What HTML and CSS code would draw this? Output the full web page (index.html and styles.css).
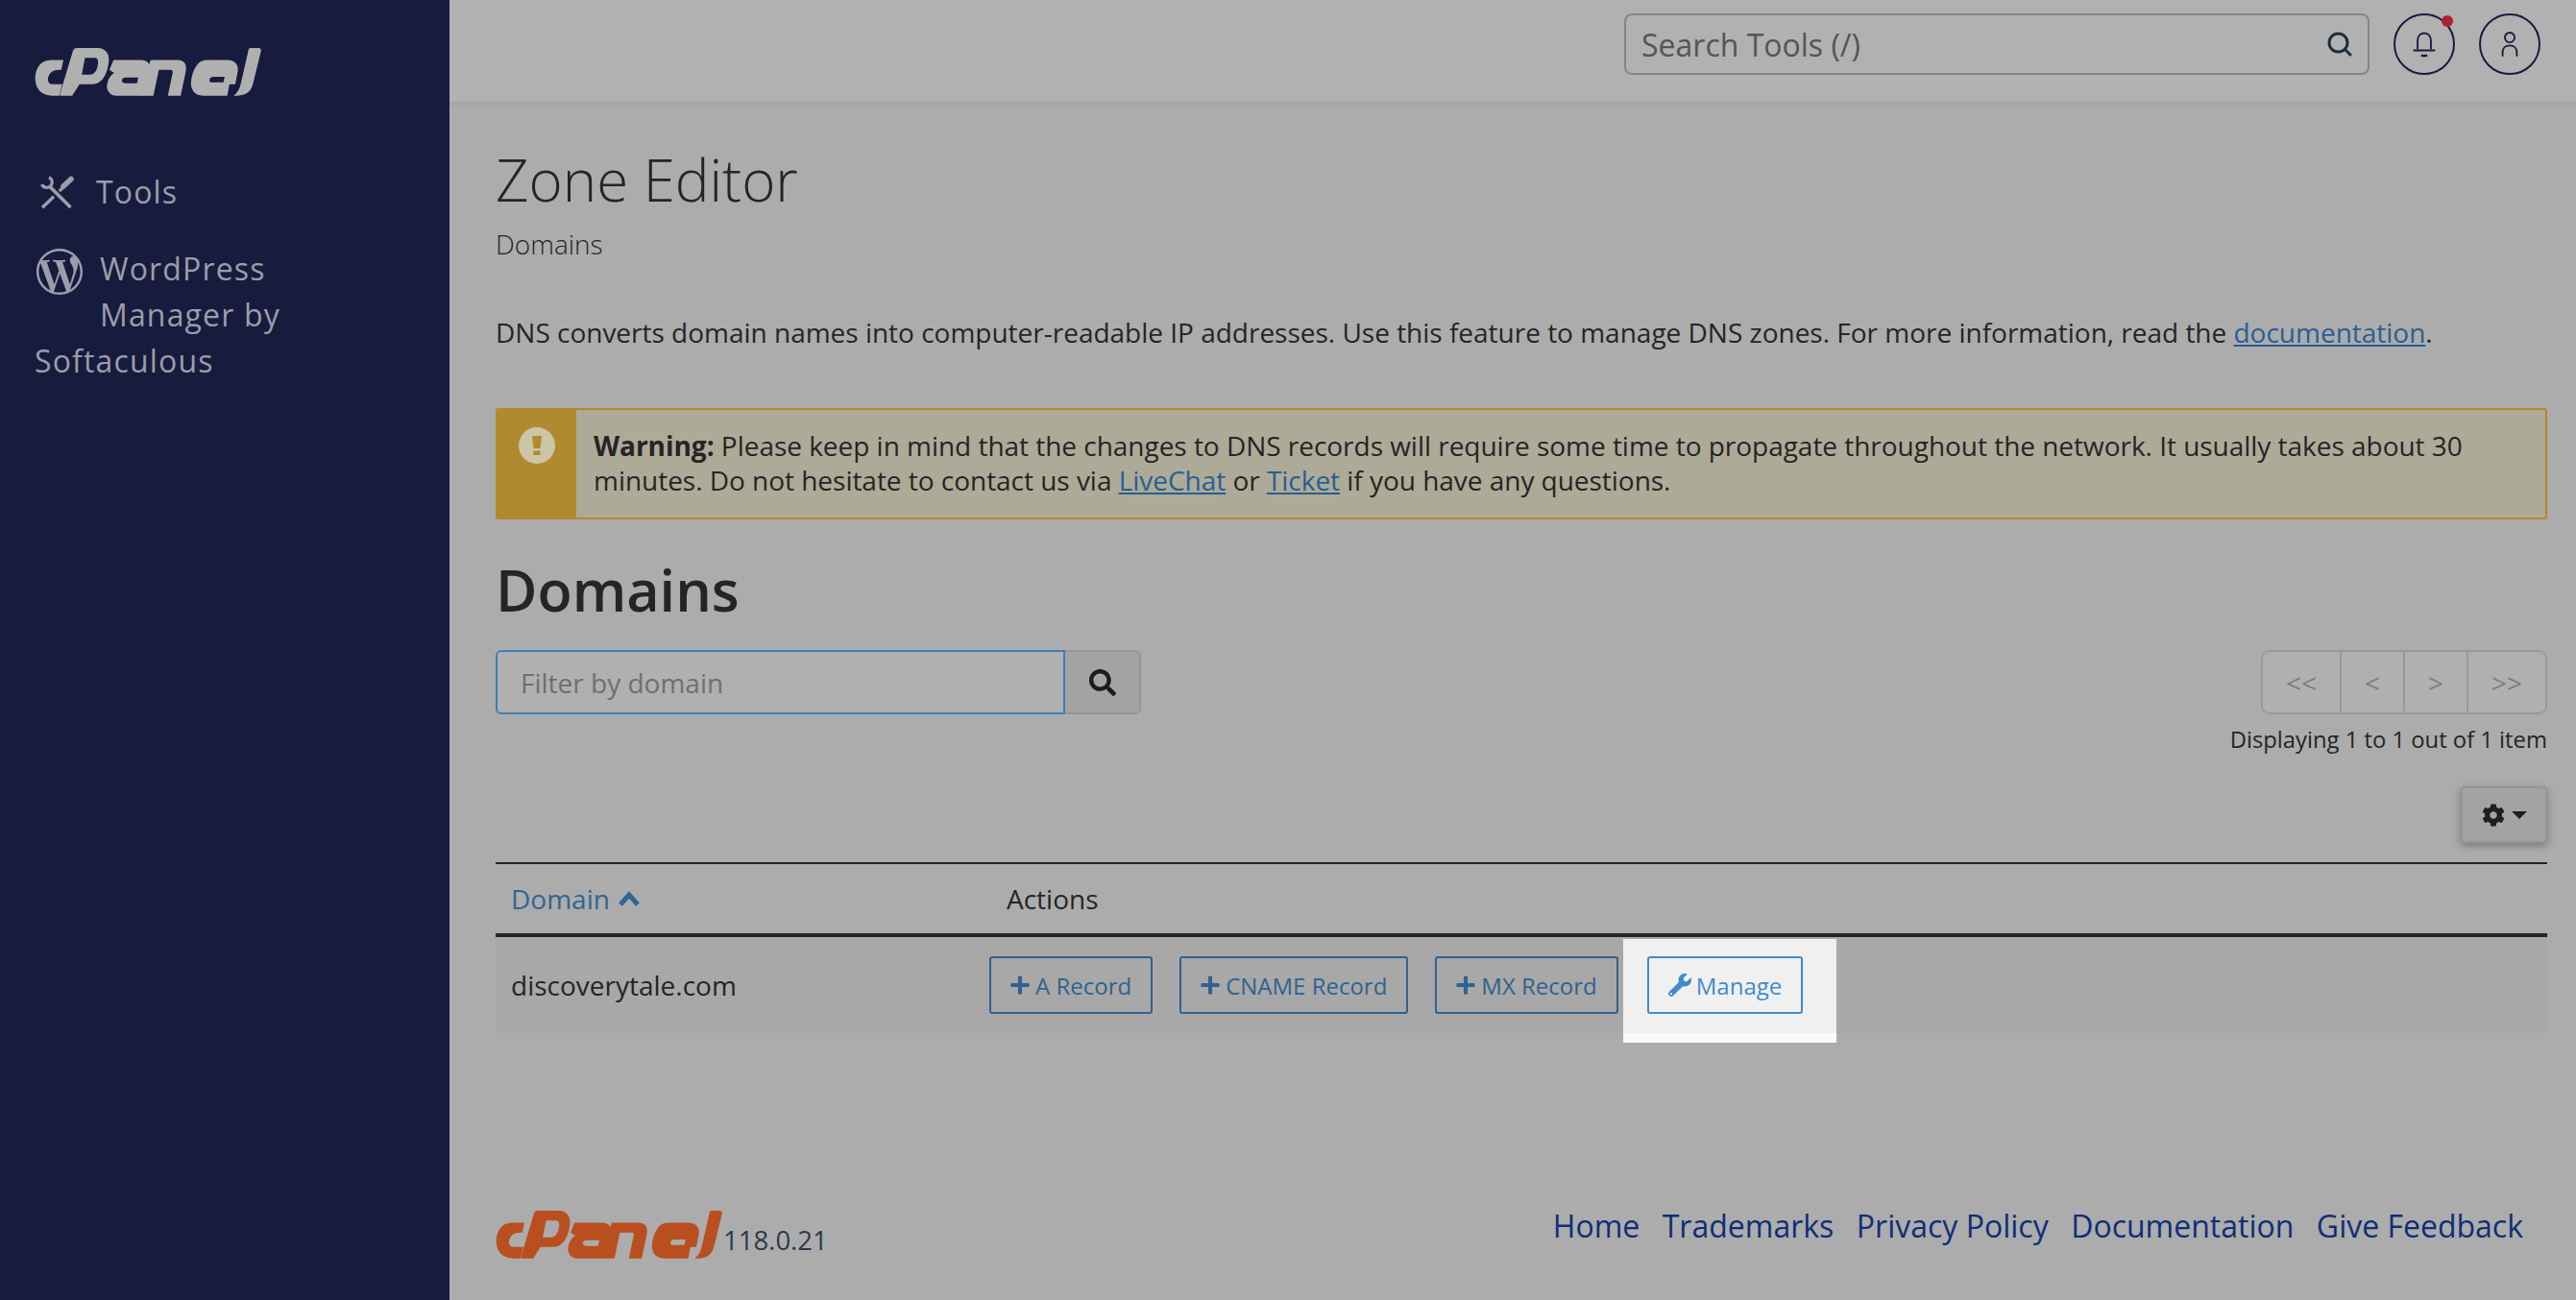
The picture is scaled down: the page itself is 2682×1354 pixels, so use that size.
FILE: index.html
```html
<!DOCTYPE html>
<html lang="en">
<head>
<meta charset="utf-8">
<title>Zone Editor - cPanel</title>
<link rel="stylesheet" href="styles.css">
</head>
<body>
<svg class="defs" width="0" height="0" aria-hidden="true">
  <symbol id="cpanel-logo" viewBox="50 93 706 148" preserveAspectRatio="none">
    <path d="M140 130H100C70 130 52 155 52 187C52 218 72 240 105 240H127L136 205H105C95 205 90 195 92 185C95 170 108 160 125 160H133Z"/>
    <path fill-rule="evenodd" d="M182 93H247C272 93 287 113 280 143C274 180 257 205 227 205H190L167 240H132Q127 240 129 235L169 103Q172 93 182 93ZM207 123H237C247 123 250 133 247 145C244 163 237 175 222 175H197Z"/>
    <path fill-rule="evenodd" d="M296 130H382C404 130 413 145 409 165L392 240H305C285 240 270 222 277 200C281 186 288 176 298 170L283 160ZM334 184C318 184 318 202 334 202H369L373 184Z"/>
    <path d="M412 130H495C518 130 526 145 520 170L505 240H465L480 170C482 165 480 160 472 160H437L420 240H386L405 150C408 140 410 134 412 130Z"/>
    <path fill-rule="evenodd" d="M585 130H650C676 130 688 148 682 170L675 205H657L650 240H575C548 240 533 220 538 190C545 155 560 130 585 130ZM607 182H642L638 199H600C592 199 592 182 607 182Z"/>
    <path d="M722 93H748C754 93 756 98 755 103L731 200C725 228 708 240 678 240H670C682 232 688 220 692 205L716 100C717 96 718 93 722 93Z"/>
  </symbol>
  <symbol id="fa-search" viewBox="0 0 512 512"><path d="M505 442.7L405.3 343c-4.5-4.5-10.6-7-17-7H372c27.6-35.3 44-79.7 44-128C416 93.1 322.9 0 208 0S0 93.1 0 208s93.1 208 208 208c48.3 0 92.7-16.4 128-44v16.3c0 6.4 2.5 12.5 7 17l99.7 99.7c9.4 9.4 24.6 9.4 33.9 0l28.3-28.3c9.4-9.4 9.4-24.6.1-34zM208 336c-70.7 0-128-57.2-128-128 0-70.7 57.2-128 128-128 70.7 0 128 57.2 128 128 0 70.7-57.2 128-128 128z"/></symbol>
  <symbol id="fa-plus" viewBox="0 0 448 512"><path d="M416 208H272V64c0-17.67-14.33-32-32-32h-32c-17.67 0-32 14.33-32 32v144H32c-17.67 0-32 14.33-32 32v32c0 17.67 14.33 32 32 32h144v144c0 17.67 14.33 32 32 32h32c17.67 0 32-14.33 32-32V304h144c17.67 0 32-14.33 32-32v-32c0-17.67-14.33-32-32-32z"/></symbol>
</svg>

<div class="app">
  <aside class="sidebar">
    <svg class="side-logo"><use href="#cpanel-logo"/></svg>
    <nav class="side-nav">
      <a class="side-item side-tools">
        <svg class="tools-icon" viewBox="0 0 35 35" fill="none" stroke="currentColor">
          <path d="M2 33.3L14 21.7" stroke-width="3.4"/>
          <path d="M19.7 16L23 13" stroke-width="3.4"/>
          <path d="M24 11L32 3.5" stroke-width="5.5" stroke-linecap="round"/>
          <path d="M31.5 33L9.5 11" stroke-width="3.8"/>
          <path d="M9 1.7A5.6 5.6 0 1 1 1.5 9" stroke-width="3.2"/>
        </svg>
        <span>Tools</span>
      </a>
      <a class="side-item side-wp">
        <svg class="wp-icon" viewBox="0 0 24 24" fill="currentColor"><path d="M21.469 6.825c.84 1.537 1.318 3.3 1.318 5.175 0 3.979-2.156 7.456-5.363 9.325l3.295-9.527c.615-1.54.82-2.771.82-3.864 0-.405-.026-.78-.07-1.11m-7.981.105c.647-.03 1.232-.105 1.232-.105.582-.075.514-.93-.067-.899 0 0-1.755.135-2.88.135-1.064 0-2.85-.15-2.85-.15-.585-.03-.661.855-.075.885 0 0 .54.061 1.125.09l1.68 4.605-2.37 7.08L5.354 6.9c.649-.03 1.234-.1 1.234-.1.585-.075.516-.93-.065-.896 0 0-1.746.138-2.874.138-.2 0-.438-.008-.69-.015C4.911 3.15 8.235 1.215 12 1.215c2.809 0 5.365 1.072 7.286 2.833-.046-.003-.091-.009-.141-.009-1.06 0-1.812.923-1.812 1.914 0 .89.513 1.643 1.06 2.531.411.72.89 1.643.89 2.977 0 .915-.354 1.994-.821 3.479l-1.075 3.585-3.9-11.61.001.014zM12 22.784c-1.059 0-2.081-.153-3.048-.437l3.237-9.406 3.315 9.087c.024.053.05.101.078.149-1.12.393-2.325.609-3.582.609M1.211 12c0-1.564.336-3.05.935-4.39L7.29 21.709C3.694 19.96 1.212 16.271 1.211 12M12 0C5.385 0 0 5.385 0 12s5.385 12 12 12 12-5.385 12-12S18.615 0 12 0"/></svg>
        WordPress Manager by Softaculous
      </a>
    </nav>
  </aside>

  <div class="main">
    <header class="topbar">
      <div class="tool-search">
        <span class="tool-search-text">Search Tools (/)</span>
        <svg class="tool-search-icon" viewBox="0 0 28 28" fill="none" stroke="currentColor"><circle cx="12.5" cy="12.5" r="9.5" stroke-width="3"/><path d="M19.5 19.5L25 25" stroke-width="3" stroke-linecap="round"/></svg>
      </div>
      <button class="round-btn bell-btn">
        <svg class="round-icon" viewBox="0 0 26 30" fill="none" stroke="currentColor" stroke-width="2"><path d="M5.5 21V11.5C5.5 6 8.5 2.5 13 2.5S20.5 6 20.5 11.5V21"/><path d="M1.5 22H24.5" stroke-linecap="round"/><path d="M10.5 28H15.5" stroke-width="2.5" stroke-linecap="round"/></svg>
        <span class="bell-dot"></span>
      </button>
      <button class="round-btn">
        <svg class="round-icon" viewBox="0 0 26 30" fill="none" stroke="currentColor" stroke-width="2"><circle cx="13" cy="7.5" r="5.5"/><path d="M5 28V24C5 19 8.5 16.5 13 16.5S21 19 21 24V28" stroke-linecap="round"/></svg>
      </button>
    </header>

    <main class="content">
      <h1 class="page-title">Zone Editor</h1>
      <p class="page-sub">Domains</p>
      <p class="intro">DNS converts domain names into computer-readable IP addresses. Use this feature to manage DNS zones. For more information, read the <a class="link">documentation</a>.</p>

      <div class="alert">
        <div class="alert-side">
          <svg class="alert-icon" viewBox="0 0 38 38"><circle cx="19" cy="19" r="19" class="alert-disc"/><path class="alert-mark" d="M14 9H24L22.5 22H15.5ZM15.5 24.5H22.5V29H15.5Z"/></svg>
        </div>
        <div class="alert-body"><strong>Warning:</strong> Please keep in mind that the changes to DNS records will require some time to propagate throughout the network. It usually takes about 30 minutes. Do not hesitate to contact us via <a class="link">LiveChat</a> or <a class="link">Ticket</a> if you have any questions.</div>
      </div>

      <h2 class="section-title">Domains</h2>

      <div class="controls">
        <div class="filter">
          <div class="filter-input">Filter by domain</div>
          <button class="filter-btn"><svg class="filter-icon"><use href="#fa-search"/></svg></button>
        </div>
        <div class="paging">
          <div class="pager">
            <span class="page-cell">&lt;&lt;</span>
            <span class="page-cell page-mid">&lt;</span>
            <span class="page-cell page-mid">&gt;</span>
            <span class="page-cell">&gt;&gt;</span>
          </div>
          <div class="page-count">Displaying 1 to 1 out of 1 item</div>
        </div>
      </div>

      <div class="settings-row">
        <button class="gear-btn">
          <svg class="gear-icon" viewBox="0 0 512 512"><path d="M487.4 315.7l-42.6-24.6c4.3-23.2 4.3-47 0-70.2l42.6-24.6c4.9-2.8 7.1-8.6 5.5-14-11.1-35.6-30-67.8-54.7-94.6-3.8-4.1-10-5.1-14.8-2.3L380.8 110c-17.9-15.4-38.5-27.3-60.8-35.1V25.8c0-5.6-3.9-10.5-9.4-11.7-36.7-8.2-74.3-7.8-109.2 0-5.5 1.2-9.4 6.1-9.4 11.7V75c-22.2 7.9-42.8 19.8-60.8 35.1L88.7 85.5c-4.9-2.8-11-1.9-14.8 2.3-24.7 26.7-43.6 58.9-54.7 94.6-1.7 5.4.6 11.2 5.5 14L67.3 221c-4.3 23.2-4.3 47 0 70.2l-42.6 24.6c-4.9 2.8-7.1 8.6-5.5 14 11.1 35.6 30 67.8 54.7 94.6 3.8 4.1 10 5.1 14.8 2.3l42.6-24.6c17.9 15.4 38.5 27.3 60.8 35.1v49.2c0 5.6 3.9 10.5 9.4 11.7 36.7 8.2 74.3 7.8 109.2 0 5.5-1.2 9.4-6.1 9.4-11.7v-49.2c22.2-7.9 42.8-19.8 60.8-35.1l42.6 24.6c4.9 2.8 11 1.9 14.8-2.3 24.7-26.7 43.6-58.9 54.7-94.6 1.5-5.5-.7-11.3-5.6-14.1zM256 336c-44.1 0-80-35.9-80-80s35.9-80 80-80 80 35.9 80 80-35.9 80-80 80z"/></svg>
          <span class="caret"></span>
        </button>
      </div>

      <div class="table">
        <div class="thead">
          <div class="th-domain">Domain <svg class="chev" viewBox="0 0 24 16" fill="none" stroke="currentColor" stroke-width="5"><path d="M3 14L12 4L21 14"/></svg></div>
          <div class="th-actions">Actions</div>
        </div>
        <div class="tbody">
          <div class="td-domain">discoverytale.com</div>
          <div class="td-actions">
            <a class="btn"><svg class="btn-icon"><use href="#fa-plus"/></svg>A Record</a>
            <a class="btn"><svg class="btn-icon"><use href="#fa-plus"/></svg>CNAME Record</a>
            <a class="btn"><svg class="btn-icon"><use href="#fa-plus"/></svg>MX Record</a>
            <span class="spot">
              <a class="btn btn-lit">
                <svg class="btn-icon wrench" viewBox="0 0 512 512"><path d="M507.73 109.1c-2.24-9.03-13.54-12.09-20.12-5.51l-74.36 74.36-67.88-11.31-11.31-67.88 74.36-74.36c6.62-6.62 3.43-17.9-5.66-20.16-47.38-11.74-99.55.91-136.58 37.93-39.64 39.64-50.55 97.1-34.05 147.2L18.74 402.76c-24.99 24.99-24.99 65.51 0 90.5 24.99 24.99 65.51 24.99 90.5 0l213.21-213.21c50.12 16.71 107.47 5.68 147.37-34.22 37.07-37.07 49.7-89.32 37.91-136.73zM64 472c-13.25 0-24-10.75-24-24 0-13.26 10.75-24 24-24s24 10.74 24 24c0 13.25-10.75 24-24 24z"/></svg>Manage
              </a>
            </span>
          </div>
        </div>
      </div>
    </main>

    <footer class="footer">
      <div class="foot-brand">
        <svg class="foot-logo"><use href="#cpanel-logo"/></svg>
        <span class="version">118.0.21</span>
      </div>
      <nav class="foot-links">
        <a>Home</a><a>Trademarks</a><a>Privacy Policy</a><a>Documentation</a><a>Give Feedback</a>
      </nav>
    </footer>
  </div>
</div>
</body>
</html>
```
FILE: styles.css
```css
* { box-sizing: border-box; }
html, body { margin: 0; height: 100%; }
body {
  font-family: "Open Sans", "Noto Sans", sans-serif;
  color: #252525;
  background: #acacac;
  overflow: hidden;
}
.defs { position: absolute; }
button { font: inherit; padding: 0; cursor: pointer; }

.app { display: flex; height: 1354px; }

/* sidebar */
.sidebar {
  width: 468px;
  flex: none;
  background: #171b3e;
  color: #9b9da8;
  padding: 50px 36px 0;
}
.side-logo { display: block; width: 236px; height: 50px; fill: #b0b0b0; }
.side-nav { margin-top: 76px; font-size: 32px; line-height: 48px; letter-spacing: 1.15px; }
.side-item { display: block; }
.side-tools { display: flex; align-items: center; gap: 23px; padding-left: 6px; height: 48px; }
.tools-icon { width: 35px; height: 35px; flex: none; }
.side-wp { margin-top: 32px; width: 300px; }
.wp-icon { float: left; width: 48px; height: 48px; margin: 3px 18px 0 2px; }

/* main */
.main { flex: 1; min-width: 0; display: flex; flex-direction: column; }
.topbar {
  height: 106px;
  background: #b1b1b1;
  box-shadow: 0 3px 5px rgba(0,0,0,.05);
  display: flex;
  align-items: flex-start;
  justify-content: flex-end;
  gap: 25px;
  padding: 14px 37px 0 0;
  flex: none;
}
.tool-search {
  width: 776px;
  height: 64px;
  border: 2px solid #85858e;
  border-radius: 8px;
  display: flex;
  align-items: center;
  justify-content: space-between;
  padding: 0 15px 0 16px;
  font-size: 32px;
  color: #555;
}
.tool-search-icon { width: 28px; height: 28px; color: #1e2c3a; }
.round-btn {
  position: relative;
  width: 64px;
  height: 64px;
  border-radius: 50%;
  border: 2px solid #171b3e;
  background: none;
  color: #171b3e;
  display: flex;
  align-items: center;
  justify-content: center;
}
.round-icon { width: 24px; height: 28px; }
.bell-dot {
  position: absolute;
  top: 0;
  right: 0;
  width: 12px;
  height: 12px;
  border-radius: 50%;
  background: #a92333;
}

/* content */
.content { flex: 1; padding: 0 30px 0 48px; }
.page-title { margin: 46px 0 0; font-size: 60px; font-weight: 300; line-height: 70px; color: #252525; }
.page-sub { margin: 14px 0 0; font-size: 28px; font-weight: 300; line-height: 36px; }
.intro { margin: 54px 0 0; font-size: 28px; line-height: 40px; letter-spacing: -.01px; }
.link { color: #275f92; text-decoration: underline; }

.alert {
  margin-top: 59px;
  display: flex;
  height: 116px;
  border: 2px solid #b08a2e;
  border-radius: 3px;
  background: #aeaa98;
}
.alert-side { width: 82px; flex: none; background: #b08a2e; display: flex; justify-content: center; padding-top: 18px; }
.alert-icon { width: 38px; height: 38px; }
.alert-disc { fill: #ccc5a6; }
.alert-mark { fill: #b08a2e; }
.alert-body { flex: 1; padding: 19px 16px 0 18px; font-size: 28px; line-height: 36px; letter-spacing: -.03px; }

.section-title { margin: 32px 0 0; font-size: 59.3px; font-weight: 600; line-height: 82px; }

.controls { margin-top: 22px; display: flex; justify-content: space-between; align-items: flex-start; }
.filter { display: flex; height: 67px; }
.filter-input {
  width: 593px;
  border: 2px solid #3f7fb8;
  border-radius: 6px 0 0 6px;
  padding: 0 24px;
  display: flex;
  align-items: center;
  font-size: 28px;
  color: #6f6f6f;
  background: #b0b0b0;
}
.filter-btn {
  width: 79px;
  border: 2px solid #959595;
  border-left: 0;
  border-radius: 0 6px 6px 0;
  background: #a3a3a3;
  display: flex;
  align-items: center;
  justify-content: center;
}
.filter-icon { width: 28px; height: 28px; fill: #1c1c1c; }

.paging { display: flex; flex-direction: column; align-items: flex-end; }
.pager {
  display: flex;
  height: 67px;
  width: 298px;
  border: 2px solid #999;
  border-radius: 9px;
  background: #b0b0b0;
}
.page-cell {
  flex: 1;
  display: flex;
  align-items: center;
  justify-content: center;
  font-size: 28px;
  color: #7d7d7d;
  border-left: 2px solid #999;
}
.page-cell:first-child { border-left: 0; }
.page-mid { flex: 0 0 66px; }
.page-count { margin-top: 9px; font-size: 23.8px; line-height: 34px; }

.settings-row { margin-top: 32px; display: flex; justify-content: flex-end; }
.gear-btn {
  width: 90px;
  height: 59px;
  border: 2px solid #959595;
  border-radius: 4px;
  background: #a3a3a3;
  box-shadow: 0 3px 8px rgba(0,0,0,.3);
  display: flex;
  align-items: center;
  justify-content: center;
  gap: 7px;
}
.gear-icon { width: 24px; height: 24px; fill: #1f1f1f; }
.caret { width: 0; height: 0; border: 8px solid transparent; border-top-color: #1f1f1f; border-bottom: 0; }

.table { margin-top: 20px; border-top: 2px solid #252525; }
.thead {
  display: flex;
  align-items: center;
  height: 76px;
  border-bottom: 4px solid #252525;
  font-size: 28px;
}
.th-domain { width: 532px; padding-left: 16px; color: #2f6594; display: flex; align-items: center; gap: 8px; }
.chev { width: 24px; height: 16px; }
.th-actions { color: #252525; }
.tbody { display: flex; align-items: center; height: 100px; background: #a8a8a8; font-size: 28px; }
.td-domain { width: 514px; padding-left: 16px; }
.td-actions { display: flex; align-items: center; gap: 28px; }
.btn {
  display: inline-flex;
  align-items: center;
  height: 60px;
  padding: 0 20px;
  gap: 6px;
  border: 2px solid #30628f;
  border-radius: 3px;
  color: #30628f;
  font-size: 24px;
  white-space: nowrap;
}
.btn-icon { width: 20px; height: 22px; fill: currentColor; flex: none; }
.wrench { width: 24px; height: 24px; }
.spot { position: relative; display: inline-flex; margin-left: 2px; }
.spot::before {
  content: "";
  position: absolute;
  left: -25px;
  right: -35px;
  top: -18px;
  bottom: -30px;
  background: linear-gradient(#f0f0f0 0 98px, #fafafa 98px);
}
.btn-lit { position: relative; color: #428bca; border-color: #428bca; background: #f0f0f0; gap: 5px; }

/* footer */
.footer {
  flex: none;
  height: 93px;
  padding: 0 55px 0 48px;
  display: flex;
  justify-content: space-between;
  align-items: flex-start;
}
.foot-brand { display: flex; align-items: flex-end; gap: 1px; }
.foot-logo { width: 236px; height: 50px; fill: #b94f1e; display: block; }
.version { font-size: 27.5px; line-height: 36px; color: #2c3a48; margin-bottom: 1px; }
.foot-links { display: flex; gap: 23.5px; font-size: 32px; line-height: 44px; color: #0e2f78; margin-top: -6px; }
```
